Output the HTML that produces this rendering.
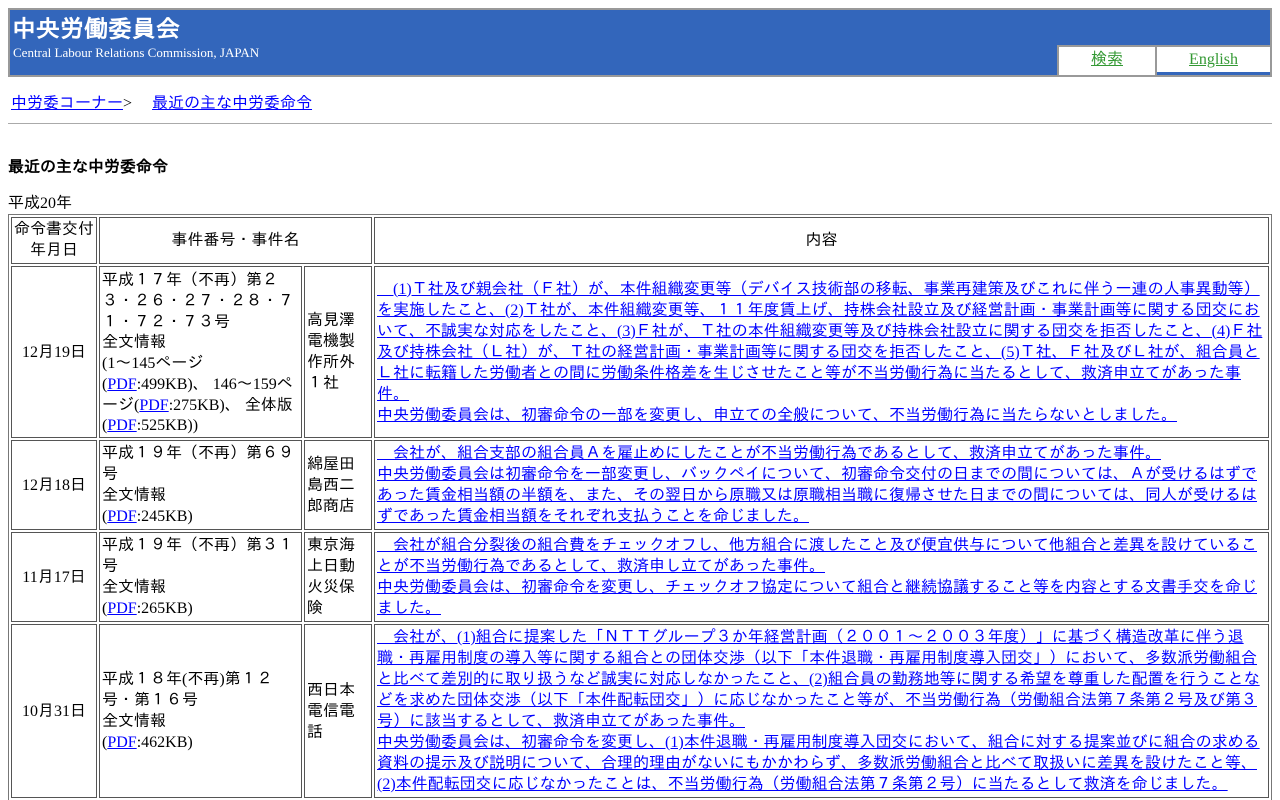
<!DOCTYPE html>
<html>
<head>
<meta charset="utf-8">
<title>最近の主な中労委命令</title>
<style>
html,body{margin:0;padding:0;background:#fff;overflow:hidden;height:800px}
body{font-family:"Liberation Serif","IPAGothic",serif;font-size:16px;color:#000;width:1280px;position:relative}
a{color:#00f;text-decoration:underline}
#head{position:absolute;left:8px;top:8px;width:1260px;height:65px;border:2px solid #999;background:#3366bb;color:#fff}
#head .t{position:absolute;left:2px;top:4px;font-size:24px;font-weight:bold;line-height:32px;white-space:nowrap}
#head .s{position:absolute;left:3px;top:35px;font-size:13px;line-height:16px;white-space:nowrap}
.tab{position:absolute;top:35px;background:#fff;text-align:center;line-height:26px;box-sizing:border-box}
.tab a{color:#339933}
#t1{left:1047px;width:100px;height:30px;border-top:2px solid #999;border-left:2px solid #999;border-right:2px solid #999}
#t2{left:1147px;width:113px;height:30px;border-top:2px solid #999;border-bottom:3px solid #3366bb}
#crumb{position:absolute;left:11px;top:93px;line-height:21px;white-space:nowrap}
#rule{position:absolute;left:8px;top:123px;width:1264px;height:1px;background:#aaa}
#h{position:absolute;left:8px;top:157px;font-weight:bold;line-height:21px}
#y{position:absolute;left:8px;top:193px;line-height:21px}
table{position:absolute;left:8px;top:214px;width:1264px;border-collapse:separate;border-spacing:2px;table-layout:fixed;border:1px solid #777}
td{border:1px solid #555;padding:2px;line-height:21px;word-break:break-all}
.c{text-align:center}
.hd{line-height:20.5px}
.tight{line-height:20.75px;padding-top:4px;padding-bottom:0}
</style>
</head>
<body>
<div id="head">
<div class="t">中央労働委員会</div>
<div class="s">Central Labour Relations Commission, JAPAN</div>
<div class="tab" id="t1"><a href="#">検索</a></div>
<div class="tab" id="t2"><a href="#">English</a></div>
</div>
<div id="crumb"><a href="#">中労委コーナー</a>&gt;　 <a href="#">最近の主な中労委命令</a></div>
<div id="rule"></div>
<div id="h">最近の主な中労委命令</div>
<div id="y">平成20年</div>
<table>
<colgroup><col style="width:86px"><col style="width:203px"><col style="width:68px"><col></colgroup>
<tr><td class="c hd">命令書交付<br>年月日</td><td class="c" colspan="2">事件番号・事件名</td><td class="c">内容</td></tr>
<tr><td class="c">12月19日</td><td class="tight">平成１７年（不再）第２３・２６・２７・２８・７１・７２・７３号<br>全文情報<br>(1～145ページ<br>(<a href="#">PDF</a>:499KB)、 146～159ページ(<a href="#">PDF</a>:275KB)、 全体版(<a href="#">PDF</a>:525KB))</td><td>高見澤電機製作所外１社</td><td><a href="#">　(1)Ｔ社及び親会社（Ｆ社）が、本件組織変更等（デバイス技術部の移転、事業再建策及びこれに伴う一連の人事異動等）を実施したこと、(2)Ｔ社が、本件組織変更等、１１年度賃上げ、持株会社設立及び経営計画・事業計画等に関する団交において、不誠実な対応をしたこと、(3)Ｆ社が、Ｔ社の本件組織変更等及び持株会社設立に関する団交を拒否したこと、(4)Ｆ社及び持株会社（Ｌ社）が、Ｔ社の経営計画・事業計画等に関する団交を拒否したこと、(5)Ｔ社、Ｆ社及びＬ社が、組合員とＬ社に転籍した労働者との間に労働条件格差を生じさせたこと等が不当労働行為に当たるとして、救済申立てがあった事件。<br>中央労働委員会は、初審命令の一部を変更し、申立ての全般について、不当労働行為に当たらないとしました。</a></td></tr>
<tr><td class="c">12月18日</td><td>平成１９年（不再）第６９号<br>全文情報<br>(<a href="#">PDF</a>:245KB)</td><td>綿屋田島西二郎商店</td><td><a href="#">　会社が、組合支部の組合員Ａを雇止めにしたことが不当労働行為であるとして、救済申立てがあった事件。<br>中央労働委員会は初審命令を一部変更し、バックペイについて、初審命令交付の日までの間については、Ａが受けるはずであった賃金相当額の半額を、また、その翌日から原職又は原職相当職に復帰させた日までの間については、同人が受けるはずであった賃金相当額をそれぞれ支払うことを命じました。</a></td></tr>
<tr><td class="c">11月17日</td><td>平成１９年（不再）第３１号<br>全文情報<br>(<a href="#">PDF</a>:265KB)</td><td>東京海上日動火災保険</td><td><a href="#">　会社が組合分裂後の組合費をチェックオフし、他方組合に渡したこと及び便宜供与について他組合と差異を設けていることが不当労働行為であるとして、救済申し立てがあった事件。<br>中央労働委員会は、初審命令を変更し、チェックオフ協定について組合と継続協議すること等を内容とする文書手交を命じました。</a></td></tr>
<tr><td class="c">10月31日</td><td>平成１８年(不再)第１２号・第１６号<br>全文情報<br>(<a href="#">PDF</a>:462KB)</td><td>西日本電信電話</td><td><a href="#">　会社が、(1)組合に提案した「ＮＴＴグループ３か年経営計画（２００１～２００３年度）」に基づく構造改革に伴う退職・再雇用制度の導入等に関する組合との団体交渉（以下「本件退職・再雇用制度導入団交」）において、多数派労働組合と比べて差別的に取り扱うなど誠実に対応しなかったこと、(2)組合員の勤務地等に関する希望を尊重した配置を行うことなどを求めた団体交渉（以下「本件配転団交」）に応じなかったこと等が、不当労働行為（労働組合法第７条第２号及び第３号）に該当するとして、救済申立てがあった事件。<br>中央労働委員会は、初審命令を変更し、(1)本件退職・再雇用制度導入団交において、組合に対する提案並びに組合の求める資料の提示及び説明について、合理的理由がないにもかかわらず、多数派労働組合と比べて取扱いに差異を設けたこと等、(2)本件配転団交に応じなかったことは、不当労働行為（労働組合法第７条第２号）に当たるとして救済を命じました。</a></td></tr>
</table>
</body>
</html>
